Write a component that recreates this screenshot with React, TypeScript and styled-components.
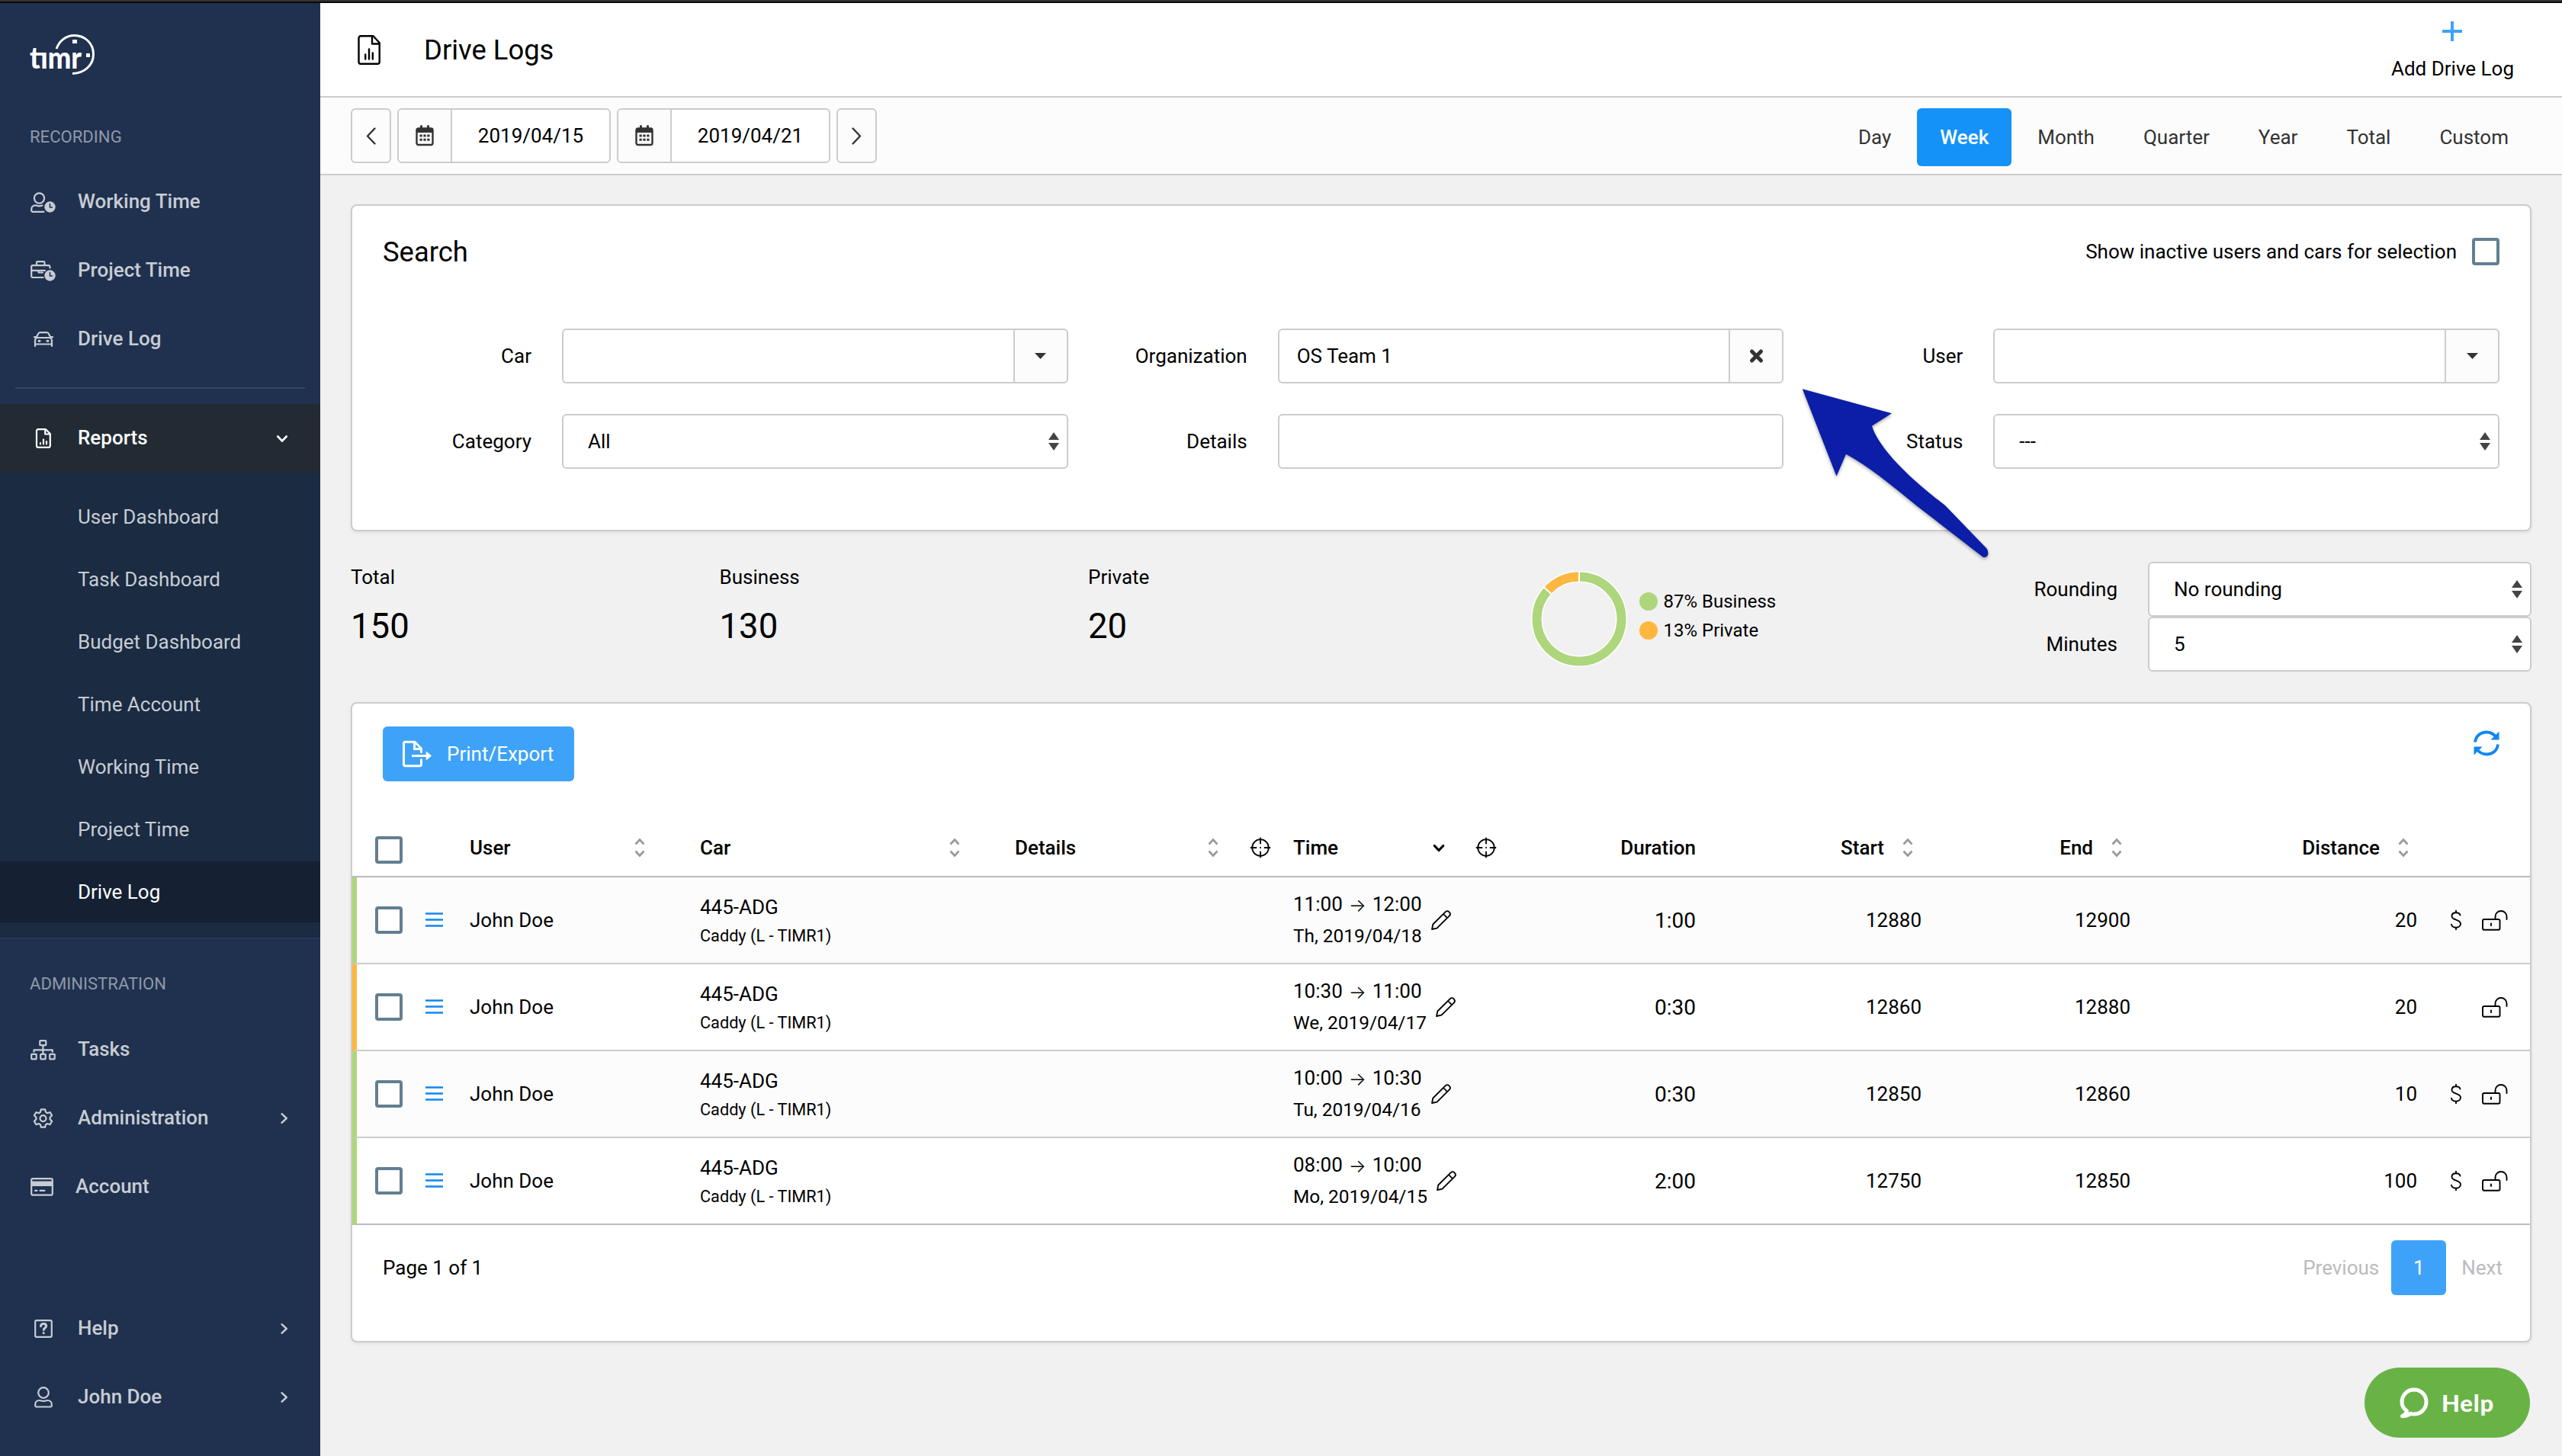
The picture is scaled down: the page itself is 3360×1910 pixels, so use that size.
import React from 'react';
import styled, {createGlobalStyle} from "styled-components";

const GlobalStyle = createGlobalStyle`
  * {
    box-sizing: border-box;
  }

  body {
    margin: 0;
    background-color: #f1f1f1;
    font-family: Roboto, "Liberation Sans", sans-serif;
    font-size: 26px;
    color: #000;
  }

  svg {
    display: block;
    flex-shrink: 0;
    overflow: visible;
  }
`

type IconProps = { w: number; h: number; sw?: number; children: React.ReactNode };

const Icon = ({w, h, sw = 2.6, children}: IconProps) => (
  <svg width={w} height={h} viewBox={`0 0 ${w} ${h}`} fill="none" stroke="currentColor" strokeWidth={sw}
       strokeLinecap="round" strokeLinejoin="round">
    {children}
  </svg>
)

const LogoIcon = () => (
  <svg width={84} height={54} viewBox="0 0 84 54" fill="none">
    <text x="-1" y="46" fill="#fff" fontFamily="Lato, sans-serif" fontWeight="900" fontSize="39" textLength="68"
          lengthAdjust="spacingAndGlyphs">tımr
    </text>
    <path d="M34 20C38 9 47 2.5 57.500 2.500C71.500 2.500 82.500 13 82.500 27C82.500 41.500 71 52 55 52.500" stroke="#fff"
          strokeWidth="3"/>
    <path d="M55 8h6v5h-6zM73 26h5v5h-5z" fill="#fff"/>
  </svg>
)

const ClockBadge = () => (
  <>
    <circle cx="25.500" cy="19.500" r="7.200" fill="currentColor" stroke="none"/>
    <path d="M25.500 15.500v4.500h3" stroke="#1f314f" strokeWidth="1.600"/>
  </>
)

const UserClockIcon = () => (
  <Icon w={33} h={27} sw={2.2}>
    <circle cx="11.500" cy="8" r="6.600"/>
    <path d="M17.500 25.800H3a1.800 1.800 0 0 1-1.800-1.800v-1.500c0-3 2.400-5.200 5.200-5.200c2 0 2.500 1 5.100 1c1.500 0 2.500-.6 4-.8"/>
    <ClockBadge/>
  </Icon>
)
const BriefcaseIcon = () => (
  <Icon w={33} h={27} sw={2.2}>
    <path d="M16.500 22H3a1.800 1.800 0 0 1-1.800-1.800V8A1.800 1.800 0 0 1 3 6.200h21A1.800 1.800 0 0 1 25.500 8v1.500"/>
    <path d="M8 6V2.500A1.300 1.300 0 0 1 9.300 1.200h7.900a1.300 1.300 0 0 1 1.300 1.300V6M1.200 12.800H19M10.500 13v2.500h5.500"/>
    <ClockBadge/>
  </Icon>
)
const CarIcon = () => (
  <Icon w={26} h={20} sw={2.2}>
    <path d="M3.500 8L6 3A3 3 0 0 1 8.700 1.200h8.600A3 3 0 0 1 20 3l2.500 5M1 7.200h2M23 7.200h2M2 19v-7.500A3.500 3.500 0 0 1 5.500 8h15a3.500 3.500 0 0 1 3.500 3.500V19M2 16.500h22"/>
    <path d="M7 12.200h1M18 12.200h1" strokeWidth="3"/>
  </Icon>
)
const ReportIcon = () => (
  <Icon w={20} h={26} sw={2.2}>
    <path d="M3 1.200h10l5.800 5.800v15.800a2 2 0 0 1-2 2H3a2 2 0 0 1-2-2V3.200a2 2 0 0 1 2-2zM12.200 1.500v6h6"/>
    <path d="M6 19v1.500M10 14.500v6M14 17v3.500"/>
  </Icon>
)
const TitleIcon = () => (
  <Icon w={30} h={39} sw={2.4}>
    <path d="M4 1.300h16.500l8.200 9v25a2.500 2.500 0 0 1-2.500 2.500H4a2.500 2.500 0 0 1-2.500-2.500V3.800A2.500 2.500 0 0 1 4 1.300zM19 1.500v10h9.500"/>
    <path d="M10.200 25.500v6M15 18.500v13M19.800 23.500v8"/>
  </Icon>
)
const TasksIcon = () => (
  <Icon w={33} h={27} sw={2.2}>
    <rect x="12.300" y="1.200" width="8" height="6" rx="0.800"/>
    <rect x="1.200" y="18.800" width="6.500" height="6.500" rx="0.800"/>
    <rect x="13.200" y="18.800" width="6.500" height="6.500" rx="0.800"/>
    <rect x="25.200" y="18.800" width="6.500" height="6.500" rx="0.800"/>
    <path d="M16.400 7.500v11M4.500 15.800v-2.500h24.300v2.500"/>
  </Icon>
)
const GearIcon = () => (
  <Icon w={25} h={26} sw={2.2}>
    <path d="M9.800 1.300h5.400l.8 3.600l2.200 1.300l3.400-1.200l2.500 4.300l-2.500 2.500v2.600l2.500 2.500l-2.500 4.300l-3.400-1.200l-2.200 1.300l-.8 3.400H9.800L9 21.300L6.800 20l-3.400 1.200L.9 16.900l2.500-2.500v-2.600L.9 9.300L3.400 5l3.400 1.200L9 4.900z"/>
    <circle cx="12.500" cy="13.100" r="4"/>
  </Icon>
)
const CardIcon = () => (
  <Icon w={30} h={24} sw={2.2}>
    <rect x="1.200" y="1.200" width="27.600" height="21.500" rx="2"/>
    <path d="M1 7.800h28" strokeWidth="6.500" strokeLinecap="butt"/>
    <path d="M6 16.800h2.500M12.500 16.800h6"/>
  </Icon>
)
const HelpIcon = () => (
  <Icon w={24} h={24} sw={2.2}>
    <rect x="1.200" y="1.200" width="21.600" height="21.600" rx="1.800"/>
    <path d="M8.500 8.800c0-2 1.500-3.200 3.700-3.200c2 0 3.500 1.100 3.500 3c0 2.400-3.400 2.400-3.400 4.900M12.200 17.500v.3" strokeWidth="3"/>
  </Icon>
)
const PersonIcon = () => (
  <Icon w={24} h={28} sw={2.2}>
    <circle cx="12" cy="8" r="6.800"/>
    <path d="M3 26.500A1.800 1.800 0 0 1 1.200 24.700v-1c0-3.400 2.400-5.700 5.400-5.700c2 0 2.900 1 5.400 1s3.400-1 5.400-1c3 0 5.400 2.300 5.400 5.700v1a1.800 1.800 0 0 1-1.800 1.800z"/>
  </Icon>
)
const CalendarIcon = () => (
  <Icon w={24} h={28} sw={2.4}>
    <rect x="1.500" y="4.500" width="21" height="21.500" rx="2.200"/>
    <path d="M1.500 4h21v6h-21z" fill="currentColor" stroke="none"/>
    <path d="M7.500 1.500v4M16.500 1.500v4" strokeWidth="3"/>
    <path d="M5.500 12.500h3.200v3H5.500zM10.400 12.500h3.200v3h-3.200zM15.300 12.500h3.200v3h-3.200zM5.500 17.800h3.200v3H5.500zM10.400 17.800h3.200v3h-3.200zM15.300 17.800h3.200v3h-3.200z"
          fill="currentColor" stroke="none"/>
  </Icon>
)
const ExportIcon = () => (
  <Icon w={38} h={34} sw={3}>
    <path d="M24.500 24.500v6.500a1.700 1.700 0 0 1-1.700 1.700H3.200a1.700 1.700 0 0 1-1.700-1.700V3a1.700 1.700 0 0 1 1.700-1.700H16L24.500 10v4.500"/>
    <path d="M15.500 1.500v9h9M12 19.500h22" strokeLinejoin="miter" strokeLinecap="butt"/>
    <path d="M31.500 14.500l6 5l-6 5z" fill="currentColor" strokeWidth="1"/>
  </Icon>
)
const RefreshIcon = () => (
  <Icon w={34} h={34} sw={3.8}>
    <path d="M2 15.500C3 7.500 9 2.500 17 2.500c5.200 0 9.500 2.300 12.500 6.500M32 18.500c-1 8-7 13-15 13c-5.200 0-9.500-2.300-12.500-6.500"
          strokeLinecap="butt"/>
    <path d="M33.500 1.500V12.500H22.500zM.5 32.500V21.500H11.500z" fill="currentColor" stroke="none"/>
  </Icon>
)
const CrosshairIcon = () => (
  <Icon w={26} h={26} sw={1.8}>
    <circle cx="13" cy="13" r="10.800"/>
    <path d="M13 .5v7M13 18.500v7M.5 13h7M18.500 13h7M12.900 13h.2"/>
  </Icon>
)
const SortIcon = () => (
  <Icon w={14} h={26} sw={2.6}>
    <path d="M1.500 8.500L7 2.500l5.500 6M1.500 17.500l5.500 6l5.500-6" strokeLinecap="butt" strokeLinejoin="miter"/>
  </Icon>
)
const ChevronDown = ({sw = 2.6}: { sw?: number }) => (
  <Icon w={14} h={9} sw={sw}>
    <path d="M1.300 1.500L7 7.500l5.700-6"/>
  </Icon>
)
const ChevronRight = () => (
  <Icon w={9} h={14} sw={2.4}>
    <path d="M1.500 1.200L7.800 7l-6.300 5.800"/>
  </Icon>
)
const PencilIcon = () => (
  <Icon w={26} h={26} sw={1.8}>
    <path d="M1 25l1.300-6.500L18.800 2.200a3.200 3.200 0 0 1 4.500 0l.6.600a3.200 3.200 0 0 1 0 4.500L7.500 23.700zM16 5l5 5.200"/>
  </Icon>
)
const DollarIcon = () => (
  <Icon w={14} h={26} sw={1.900}>
    <path d="M12.500 6.500C12 4.500 10 3.300 7 3.300c-3.200 0-5.500 1.700-5.500 4.500c0 6.200 11.500 3.500 11.500 10c0 3-2.500 4.900-6 4.900c-3.400 0-5.600-1.500-6-4M7 .8v2.500M7 22.700v2.500"/>
  </Icon>
)
const UnlockIcon = () => (
  <Icon w={34} h={27} sw={1.900}>
    <rect x="1" y="12" width="22.500" height="13.800" rx="2"/>
    <path d="M17.500 12V8.500a7.500 7.500 0 0 1 15 0V12M12 17.500v2.500"/>
  </Icon>
)
const ChatIcon = () => (
  <Icon w={38} h={41} sw={5}>
    <path d="M9.500 31C5.500 28 3 24 3 19.500C3 10 10 3 19 3s16 7 16 16s-7 16-16 16c-1.500 0-3-.2-4.500-.7c-3 2-7 3.200-11 3.500c3.500-1.800 5.500-4 6-6.800z"/>
  </Icon>
)

const MenuItem = ({icon, text, arrow, active, shift}: {
  icon: React.ReactNode; text: string; arrow?: React.ReactNode; active?: boolean; shift?: boolean
}) => (
  <MenuItemStyled $active={active}>
    <MenuIcon $shift={shift}>{icon}</MenuIcon>
    <MenuText>{text}</MenuText>
    {arrow}
  </MenuItemStyled>
)

const SelectField = ({value}: { value: string }) => (
  <SelectWrapper>
    <SelectStyled defaultValue={value}>
      <option>{value}</option>
    </SelectStyled>
    <SelectArrows width={14} height={24} viewBox="0 0 14 24">
      <path d="M7 0l7 10H0zM0 14h14L7 24z" fill="#444"/>
    </SelectArrows>
  </SelectWrapper>
)

const ComboField = ({value = '', clear}: { value?: string; clear?: boolean }) => (
  <Combo>
    <ComboInput defaultValue={value}/>
    <ComboButton>
      {clear
        ? <Icon w={19} h={18} sw={5}><path d="M3.500 3l12 12M15.500 3l-12 12"/></Icon>
        : <svg width={15} height={8} viewBox="0 0 15 8"><path d="M0 0h15L7.500 8z" fill="#333"/></svg>}
    </ComboButton>
  </Combo>
)

const reports = ['User Dashboard', 'Task Dashboard', 'Budget Dashboard', 'Time Account', 'Working Time', 'Project Time', 'Drive Log']
const periods = ['Day', 'Week', 'Month', 'Quarter', 'Year', 'Total', 'Custom']
const stats = [
  {title: 'Total', value: 150},
  {title: 'Business', value: 130},
  {title: 'Private', value: 20},
]
const rows = [
  {from: '11:00', to: '12:00', date: 'Th, 2019/04/18', duration: '1:00', start: 12880, end: 12900, distance: 20, business: true},
  {from: '10:30', to: '11:00', date: 'We, 2019/04/17', duration: '0:30', start: 12860, end: 12880, distance: 20, business: false},
  {from: '10:00', to: '10:30', date: 'Tu, 2019/04/16', duration: '0:30', start: 12850, end: 12860, distance: 10, business: true},
  {from: '08:00', to: '10:00', date: 'Mo, 2019/04/15', duration: '2:00', start: 12750, end: 12850, distance: 100, business: true},
]

const Sidebar = () => (
  <SidebarStyled>
    <Logo><LogoIcon/></Logo>
    <MenuTitle>RECORDING</MenuTitle>
    <MenuItem icon={<UserClockIcon/>} text="Working Time"/>
    <MenuItem icon={<BriefcaseIcon/>} text="Project Time"/>
    <MenuItem icon={<CarIcon/>} text="Drive Log"/>
    <Divider/>
    <MenuItem icon={<ReportIcon/>} text="Reports" arrow={<ChevronDown/>} active/>
    <SubMenu>
      {reports.map(item => <SubMenuItem key={item} $active={item === 'Drive Log'}>{item}</SubMenuItem>)}
    </SubMenu>
    <AdminTitle>ADMINISTRATION</AdminTitle>
    <MenuItem icon={<TasksIcon/>} text="Tasks"/>
    <MenuItem icon={<GearIcon/>} text="Administration" arrow={<ChevronRight/>}/>
    <MenuItem icon={<CardIcon/>} text="Account" shift/>
    <SidebarBottom>
      <MenuItem icon={<HelpIcon/>} text="Help" arrow={<ChevronRight/>}/>
      <MenuItem icon={<PersonIcon/>} text="John Doe" arrow={<ChevronRight/>}/>
    </SidebarBottom>
  </SidebarStyled>
)

const DatePicker = ({date}: { date: string }) => (
  <DateGroup>
    <DateIcon><CalendarIcon/></DateIcon>
    <DateText>{date}</DateText>
  </DateGroup>
)

const SearchCard = () => (
  <SearchCardStyled>
    <SearchHeader>
      <Heading>Search</Heading>
      <CheckLabel>Show inactive users and cars for selection<Checkbox/></CheckLabel>
    </SearchHeader>
    <SearchGrid>
      <Field><Label>Car</Label><ComboField/></Field>
      <Field><Label>Organization</Label><ComboField value="OS Team 1" clear/></Field>
      <Field><Label>User</Label><ComboField/></Field>
      <Field><Label>Category</Label><SelectField value="All"/></Field>
      <Field><Label>Details</Label><InputStyled/></Field>
      <Field><Label>Status</Label><SelectField value="---"/></Field>
    </SearchGrid>
  </SearchCardStyled>
)

const radius = 55.5
const circumference = 2 * Math.PI * radius

const Summary = () => (
  <SummaryStyled>
    {stats.map(stat => (
      <Stat key={stat.title}>
        <StatTitle>{stat.title}</StatTitle>
        <StatValue>{stat.value}</StatValue>
      </Stat>
    ))}
    <ChartWrapper>
      <svg width={126} height={126} viewBox="-63 -63 126 126" fill="none">
        <circle r={radius} stroke="#fff" strokeWidth="15"/>
        <g transform="rotate(-90)" strokeWidth="12">
          <circle r={radius} stroke="#aed67c"/>
          <circle r={radius} stroke="#ffb740" strokeDasharray={`${circumference * 0.133} ${circumference}`}
                  transform="rotate(-48)"/>
        </g>
        <path d="M0 -48V-63M-36.100 -32.500L-46.600 -42" stroke="#fff" strokeWidth="2"/>
      </svg>
      <Legend>
        <LegendItem><Dot $color="#aed67c"/>87% Business</LegendItem>
        <LegendItem><Dot $color="#ffb740"/>13% Private</LegendItem>
      </Legend>
    </ChartWrapper>
    <RoundingForm>
      <Field><Label>Rounding</Label><SelectField value="No rounding"/></Field>
      <Field><Label>Minutes</Label><SelectField value="5"/></Field>
    </RoundingForm>
  </SummaryStyled>
)

const LogsTable = () => (
  <TableCard>
    <TableToolbar>
      <ExportButton><ExportIcon/>Print/Export</ExportButton>
      <RefreshButton><RefreshIcon/></RefreshButton>
    </TableToolbar>
    <HeadRow>
      <HeadCheckCell><Checkbox/></HeadCheckCell>
      <span/>
      <HeadCell $end={72}>User<Sort><SortIcon/></Sort></HeadCell>
      <HeadCell $end={72}>Car<Sort><SortIcon/></Sort></HeadCell>
      <HeadCell $end={30}>Details<Sort><SortIcon/></Sort><HeadExtra><CrosshairIcon/></HeadExtra></HeadCell>
      <HeadCell $end={32}>Time<Sort $dark><ChevronDown sw={3.2}/></Sort><HeadExtra><CrosshairIcon/></HeadExtra></HeadCell>
      <HeadNumCell>Duration</HeadNumCell>
      <HeadNumCell $sort>Start<Sort><SortIcon/></Sort></HeadNumCell>
      <HeadNumCell $sort>End<Sort><SortIcon/></Sort></HeadNumCell>
      <HeadNumCell $sort>Distance<Sort><SortIcon/></Sort></HeadNumCell>
    </HeadRow>
    {rows.map(row => (
      <Row key={row.date} $business={row.business}>
        <CheckCell><Checkbox/></CheckCell>
        <MenuCell><Icon w={23} h={20} sw={2.6}><path d="M0 1.500h23M0 9.500h23M0 17.500h23" strokeLinecap="butt"/></Icon></MenuCell>
        <span>John Doe</span>
        <CarCell>445-ADG<small>Caddy (L - TIMR1)</small></CarCell>
        <span/>
        <TimeCell>
          <div>
            <TimeText>{row.from}<TimeArrow>→</TimeArrow>{row.to}</TimeText>
            <DateLine>{row.date}</DateLine>
          </div>
          <PencilIcon/>
        </TimeCell>
        <DurationCell>{row.duration}</DurationCell>
        <NumCell>{row.start}</NumCell>
        <NumCell>{row.end}</NumCell>
        <NumCell>{row.distance}</NumCell>
        <ActionsCell>{row.business && <DollarIcon/>}<UnlockIcon/></ActionsCell>
      </Row>
    ))}
    <TableFooter>
      <span>Page 1 of 1</span>
      <Pagination>
        <PageLink>Previous</PageLink>
        <PageButton>1</PageButton>
        <PageLink>Next</PageLink>
      </Pagination>
    </TableFooter>
  </TableCard>
)

export default function App() {
  return (
    <PageWrapper>
      <GlobalStyle/>
      <TopLine/>
      <LayOut>
        <Sidebar/>
        <Main>
          <Header>
            <TitleIcon/>
            <PageTitle>Drive Logs</PageTitle>
            <AddButton>
              <Icon w={26} h={26} sw={4}><path d="M13 0v26M0 13h26" strokeLinecap="butt" stroke="#3ea3f8"/></Icon>
              Add Drive Log
            </AddButton>
          </Header>
          <Toolbar>
            <DateNav>
              <NavButton><Icon w={13} h={23} sw={2.400}><path d="M11.500 1.500L2 11.500l9.500 10"/></Icon></NavButton>
              <DatePicker date="2019/04/15"/>
              <DatePicker date="2019/04/21"/>
              <NavButton><Icon w={13} h={23} sw={2.400}><path d="M1.500 1.500l9.500 10l-9.500 10"/></Icon></NavButton>
            </DateNav>
            <Periods>
              {periods.map(period => <Period key={period} $active={period === 'Week'}>{period}</Period>)}
            </Periods>
          </Toolbar>
          <Content>
            <SearchCard/>
            <Summary/>
            <LogsTable/>
          </Content>
        </Main>
      </LayOut>
      <Pointer width={246} height={224} viewBox="2363 509 246 224">
        <path fill="#0c1ea7"
              d="M2363.800 510.300L2481 542.300L2455 558.700C2462 582 2492 618 2551 663L2605 719C2609 724 2608 731 2602 731C2600 731 2599 729.500 2597 728L2513 663C2480 636 2450 611 2421 595.700L2408.500 624.700z"/>
      </Pointer>
      <HelpButton><ChatIcon/>Help</HelpButton>
    </PageWrapper>
  )
}

const PageWrapper = styled.div`
  position: relative;
  display: flex;
  flex-direction: column;
  height: 1910px;
  overflow: hidden;
`
const TopLine = styled.div`
  height: 4px;
  flex-shrink: 0;
  background-color: #333;
  border-bottom: 2px solid #0a0a0a;
`
const LayOut = styled.div`
  flex: 1;
  display: flex;
`
const SidebarStyled = styled.aside`
  width: 420px;
  flex-shrink: 0;
  display: flex;
  flex-direction: column;
  background-color: #1f314f;
  color: #c8ccd3;
`
const Logo = styled.div`
  height: 136px;
  padding: 40px 0 0 40px;
`
const MenuTitle = styled.div`
  height: 80px;
  padding: 24px 39px 0;
  font-size: 22.1px;
  line-height: 30px;
  color: #8f98a7;
`
const AdminTitle = styled(MenuTitle)`
  height: 100px;
  padding-top: 43px;
`
const MenuItemStyled = styled.div<{ $active?: boolean }>`
  display: flex;
  align-items: center;
  height: 90px;
  padding-right: 43px;
  background-color: ${({$active}) => $active ? '#222b34' : 'transparent'};
  color: ${({$active}) => $active ? '#fff' : 'inherit'};
`
const MenuIcon = styled.div<{ $shift?: boolean }>`
  display: flex;
  justify-content: center;
  width: ${({$shift}) => $shift ? 30 : 33}px;
  margin: 0 29px 0 40px;
`
const MenuText = styled.span`
  flex: 1;
  font-weight: 500;
  line-height: 30px;
  margin-top: -2px;
`
const Divider = styled.div`
  height: 2px;
  margin: 18px 20px 20px;
  background-color: #33445f;
`
const SubMenu = styled.div`
  display: flex;
  flex-direction: column;
  gap: 2px;
  padding: 18px 0 20px;
  background-color: #1a2b42;
  border-bottom: 2px solid #273959;
`
const SubMenuItem = styled.div<{ $active?: boolean }>`
  height: 80px;
  line-height: 80px;
  padding-left: 102px;
  background-color: ${({$active}) => $active ? '#152033' : 'transparent'};
  color: ${({$active}) => $active ? '#fff' : 'inherit'};
`
const SidebarBottom = styled.div`
  margin-top: auto;
  padding-bottom: 32px;
`
const Main = styled.main`
  flex: 1;
  min-width: 0;
`
const Header = styled.header`
  display: flex;
  align-items: center;
  height: 124px;
  padding: 0 63px 0 49px;
  background-color: #fff;
  border-bottom: 2px solid #ccc;
`
const PageTitle = styled.h1`
  flex: 1;
  margin: 0 0 0 57px;
  font-size: 36.4px;
  font-weight: 400;
`
const AddButton = styled.div`
  display: flex;
  flex-direction: column;
  align-items: center;
  gap: 21px;
  padding-top: 3px;
  line-height: 30px;
`
const Toolbar = styled.div`
  display: flex;
  justify-content: space-between;
  height: 102px;
  padding: 14px 40px 0;
  background-color: #fcfcfc;
  border-bottom: 2px solid #ccc;
`
const DateNav = styled.div`
  display: flex;
  gap: 8px;
  height: 72px;
`
const NavButton = styled.div`
  display: flex;
  align-items: center;
  justify-content: center;
  width: 53px;
  border: 2px solid #ccc;
  border-radius: 6px;
  color: #333;
`
const DateGroup = styled.div`
  display: flex;
  width: 280px;
  border: 2px solid #ccc;
  border-radius: 6px;
  background-color: #fff;
`
const DateIcon = styled.div`
  display: flex;
  align-items: center;
  justify-content: center;
  width: 70px;
  border-right: 2px solid #ccc;
  border-radius: 4px 0 0 4px;
  background-color: #fcfcfc;
  color: #333;
`
const DateText = styled.div`
  flex: 1;
  text-align: center;
  line-height: 68px;
`
const Periods = styled.div`
  display: flex;
  gap: 4px;
`
const Period = styled.div<{ $active?: boolean }>`
  height: 76px;
  line-height: 76px;
  padding: 0 30px;
  border-radius: 6px;
  background-color: ${({$active}) => $active ? '#1492f8' : 'transparent'};
  color: ${({$active}) => $active ? '#fff' : '#333'};
  font-weight: ${({$active}) => $active ? 500 : 400};
`
const Content = styled.div`
  padding: 38px 40px 0;
`
const Card = styled.section`
  background-color: #fff;
  border: 2px solid #ccc;
  border-radius: 8px;
  box-shadow: 0 2px 4px rgba(0, 0, 0, 0.08);
`
const SearchCardStyled = styled(Card)`
  height: 429px;
  padding: 40px;
`
const SearchHeader = styled.div`
  display: flex;
  justify-content: space-between;
  align-items: center;
  height: 40px;
`
const Heading = styled.h2`
  margin: 0;
  font-size: 36.4px;
  font-weight: 400;
`
const CheckLabel = styled.label`
  display: flex;
  align-items: center;
  gap: 20px;
`
const Checkbox = styled.span`
  display: block;
  width: 36px;
  height: 36px;
  border: 4px solid #637f91;
  border-radius: 4px;
  background-color: #fff;
`
const SearchGrid = styled.div`
  display: grid;
  grid-template-columns: repeat(3, 1fr);
  gap: 40px;
  margin-top: 81px;
`
const Field = styled.div`
  display: flex;
  align-items: center;
`
const Label = styled.label`
  width: 235px;
  padding-right: 40px;
  flex-shrink: 0;
  text-align: right;
`
const InputStyled = styled.input`
  flex: 1;
  min-width: 0;
  height: 72px;
  padding: 0 23px;
  border: 2px solid #ccc;
  border-radius: 6px;
  background-color: #fff;
  font: inherit;
  outline: none;
`
const Combo = styled.div`
  flex: 1;
  display: flex;
`
const ComboInput = styled(InputStyled)`
  border-right: none;
  border-radius: 6px 0 0 6px;
`
const ComboButton = styled.div`
  display: flex;
  align-items: center;
  justify-content: center;
  width: 72px;
  border: 2px solid #ccc;
  border-radius: 0 6px 6px 0;
  background-color: #fcfcfc;
  color: #333;
`
const SelectWrapper = styled.div`
  position: relative;
  flex: 1;
`
const SelectStyled = styled.select`
  display: block;
  width: 100%;
  height: 72px;
  padding: 0 32px;
  border: 2px solid #ccc;
  border-radius: 6px;
  background-color: #fff;
  color: #000;
  font: inherit;
  appearance: none;
`
const SelectArrows = styled.svg`
  position: absolute;
  top: 24px;
  right: 12px;
`
const SummaryStyled = styled.div`
  display: flex;
  height: 224px;
`
const Stat = styled.div`
  width: 483.5px;
  padding-top: 44px;
`
const StatTitle = styled.div`
  line-height: 32px;
`
const StatValue = styled.div`
  margin-top: 21px;
  font-size: 45.5px;
  line-height: 56px;
`
const ChartWrapper = styled.div`
  display: flex;
  gap: 16px;
  width: 600px;
  padding: 52px 0 0 97px;
`
const Legend = styled.div`
  padding-top: 21px;
`
const LegendItem = styled.div`
  display: flex;
  align-items: center;
  gap: 8px;
  height: 38px;
  font-size: 24px;
`
const Dot = styled.span<{ $color: string }>`
  width: 24px;
  height: 24px;
  border-radius: 50%;
  background-color: ${({$color}) => $color};
`
const RoundingForm = styled.div`
  width: 738px;
  margin: 40px 0 0 auto;
`
const TableCard = styled(Card)`
  height: 840px;
`
const TableToolbar = styled.div`
  display: flex;
  justify-content: space-between;
  align-items: flex-start;
  padding: 30px 40px 0 40px;
`
const ExportButton = styled.div`
  display: flex;
  align-items: center;
  gap: 20px;
  width: 251px;
  height: 72px;
  padding-left: 26px;
  border-radius: 6px;
  background-color: #3ea3f8;
  color: #fff;
`
const RefreshButton = styled.div`
  margin-top: 5px;
  color: #1187ef;
`
const GridRow = styled.div`
  display: grid;
  grid-template-columns: 80px 68px 302px 413px 365px 298px 230px 296px 274px 376px 1fr;
  align-items: center;
`
const HeadRow = styled(GridRow)`
  height: 76px;
  margin-top: 50px;
  padding-left: 6px;
  border-bottom: 2px solid #bbb;
  font-weight: 500;
`
const Row = styled(GridRow)<{ $business: boolean }>`
  height: 114px;
  border-bottom: 2px solid #ccc;
  border-left: 6px solid ${({$business}) => $business ? '#aed67c' : '#ffb740'};

  &:nth-of-type(odd) {
    background-color: #fcfcfc;
  }

  &:nth-last-of-type(2) {
    border-bottom-color: #bbb;
  }
`
const HeadCell = styled.div<{ $end: number }>`
  display: flex;
  align-items: center;
  padding-right: ${({$end}) => $end}px;
`
const Sort = styled.span<{ $dark?: boolean }>`
  margin-left: auto;
  color: ${({$dark}) => $dark ? '#000' : '#999'};
`
const HeadExtra = styled.span`
  margin-left: 42px;
`
const HeadNumCell = styled.div<{ $sort?: boolean }>`
  display: flex;
  align-items: center;
  justify-content: flex-end;
  gap: 24px;
  padding-right: ${({$sort}) => $sort ? 11 : 0}px;

  ${Sort} {
    margin-left: 0;
  }
`
const CheckCell = styled.div`
  padding-left: 24px;
`
const HeadCheckCell = styled(CheckCell)`
  padding-top: 6px;
`
const MenuCell = styled.div`
  padding-left: 10px;
  color: #1187ef;
`
const CarCell = styled.div`
  display: flex;
  flex-direction: column;
  padding-top: 3px;
  line-height: 38px;

  small {
    font-size: 21.7px;
  }
`
const TimeCell = styled.div`
  display: flex;
  align-items: center;
  gap: 12px;
`
const TimeText = styled.div`
  display: flex;
  line-height: 40px;
`
const TimeArrow = styled.span`
  display: flex;
  justify-content: center;
  width: 39px;
  padding-top: 2px;
  font-family: Inter, "DejaVu Sans", sans-serif;
  font-size: 24px;
  font-weight: 300;
`
const DateLine = styled.div`
  font-size: 24.4px;
  line-height: 40px;
`
const NumCell = styled.div`
  text-align: right;
`
const DurationCell = styled(NumCell)`
  font-size: 28px;
`
const ActionsCell = styled.div`
  display: flex;
  justify-content: flex-end;
  gap: 27px;
  padding-right: 29px;
`
const TableFooter = styled.div`
  display: flex;
  justify-content: space-between;
  align-items: center;
  padding: 20px 36px 0 40px;
`
const Pagination = styled.div`
  display: flex;
  align-items: center;
`
const PageLink = styled.span`
  color: #bbb;
`
const PageButton = styled.span`
  width: 72px;
  height: 72px;
  margin: 0 20px 0 16px;
  border-radius: 6px;
  background-color: #3ea3f8;
  color: #fff;
  text-align: center;
  line-height: 72px;
`
const Pointer = styled.svg`
  position: absolute;
  left: 2363px;
  top: 509px;
  filter: drop-shadow(0 2px 2px rgba(0, 0, 0, 0.35));
`
const HelpButton = styled.div`
  position: absolute;
  right: 42px;
  bottom: 24px;
  display: flex;
  align-items: center;
  gap: 17px;
  width: 217px;
  height: 92px;
  padding-left: 46px;
  border-radius: 46px;
  background-color: #69b346;
  color: #fff;
  font-family: Lato, sans-serif;
  font-size: 31px;
  font-weight: 900;
  letter-spacing: 0.8px;
`
